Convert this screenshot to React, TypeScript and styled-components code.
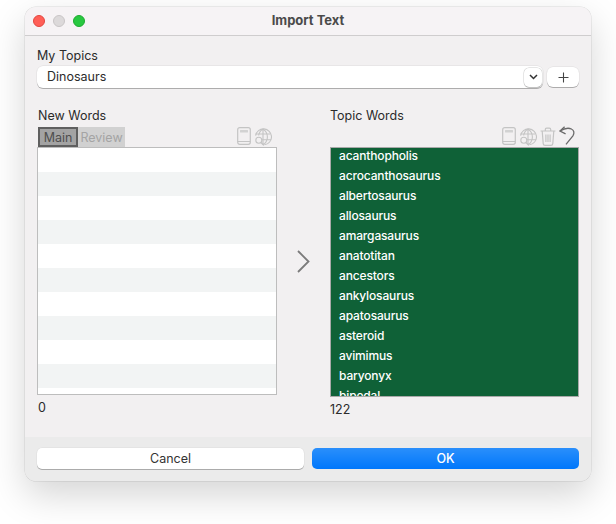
import React from 'react';
import styled, { createGlobalStyle } from 'styled-components';

const GlobalStyle = createGlobalStyle`
  html, body {
    margin: 0;
    padding: 0;
    background: #ffffff;
  }
  body {
    font-family: Inter, "Liberation Sans", sans-serif;
    font-size: 12.5px;
    color: #2b2b2b;
  }
`;

const Page = styled.div`
  width: 616px;
  height: 524px;
  padding: 7px 25px 0;
  box-sizing: border-box;
  overflow: hidden;
`;

const Window = styled.div`
  width: 566px;
  height: 474px;
  box-sizing: border-box;
  display: flex;
  flex-direction: column;
  background: #f2f0f1;
  border-radius: 11px;
  overflow: hidden;
  box-shadow: 0 0 0 0.5px rgba(0, 0, 0, 0.12), 0 14px 36px rgba(0, 0, 0, 0.17);
`;

const TitleBar = styled.div`
  position: relative;
  flex: none;
  height: 29px;
  padding-bottom: 2px;
  box-sizing: border-box;
  display: flex;
  align-items: center;
  justify-content: center;
  background: #f6f3f5;
  border-bottom: 1px solid #cfcdce;
  font-weight: 700;
  font-size: 13px;
  color: #4a4a4a;
`;

const Lights = styled.div`
  position: absolute;
  left: 8px;
  top: 8px;
  display: flex;
  gap: 8px;
`;

const Light = styled.span<{ $color: string; $edge: string }>`
  width: 12px;
  height: 12px;
  box-sizing: border-box;
  border-radius: 50%;
  background: ${(p) => p.$color};
  border: 0.5px solid ${(p) => p.$edge};
`;

const Body = styled.div`
  flex: 1;
  display: flex;
  flex-direction: column;
  padding: 12px 12px 0;
`;

const Label = styled.div<{ $indent?: number }>`
  height: 16px;
  line-height: 16px;
  padding-left: ${(p) => p.$indent ?? 0}px;
`;

const TopicRow = styled.div`
  display: flex;
  align-items: center;
  gap: 4px;
  margin-top: 2px;
  height: 22px;
`;

const Combo = styled.div`
  width: 506px;
  height: 22px;
  box-sizing: border-box;
  display: flex;
  align-items: center;
  justify-content: space-between;
  padding: 0 1px 2px 10px;
  background: #ffffff;
  border-radius: 6px;
  box-shadow: 0 0 0 0.5px rgba(0, 0, 0, 0.08), 0 1px 0 rgba(0, 0, 0, 0.25);
`;

const ChevronButton = styled.span`
  width: 18px;
  height: 19px;
  margin-top: 2px;
  display: flex;
  align-items: center;
  justify-content: center;
  background: #ffffff;
  border-radius: 5px;
  box-shadow: 0 0 0 0.5px rgba(0, 0, 0, 0.2), 0 1px 0 rgba(0, 0, 0, 0.15);
`;

const PlusButton = styled.span`
  width: 32px;
  height: 20px;
  display: flex;
  align-items: center;
  justify-content: center;
  background: #ffffff;
  border-radius: 6px;
  box-shadow: 0 0 0 0.5px rgba(0, 0, 0, 0.08), 0 1px 0 rgba(0, 0, 0, 0.25);
`;

const Columns = styled.div`
  display: grid;
  grid-template-columns: 240px 53px 249px;
  margin-top: 20px;
`;

const Column = styled.div`
  display: flex;
  flex-direction: column;
`;

const ArrowCell = styled.div`
  display: flex;
  align-items: center;
  justify-content: center;
  padding-bottom: 3px;
`;

const ListBar = styled.div`
  height: 20px;
  margin-top: 3px;
  display: flex;
  align-items: flex-end;
  justify-content: space-between;
`;

const Tabs = styled.div`
  display: flex;
  margin-left: 1px;
`;

const Tab = styled.span<{ $active?: boolean }>`
  height: 20px;
  box-sizing: border-box;
  display: flex;
  align-items: center;
  justify-content: center;
  width: ${(p) => (p.$active ? 40 : 47)}px;
  background: ${(p) => (p.$active ? '#a3a3a3' : '#d1d1d1')};
  border: ${(p) => (p.$active ? '2px solid #5f5f5f' : 'none')};
  color: ${(p) => (p.$active ? '#4e4e4e' : '#a4a4a4')};
`;

const Tools = styled.div<{ $right: number }>`
  margin-left: auto;
  padding-right: ${(p) => p.$right}px;
  padding-bottom: 1px;
  display: flex;
  gap: 3px;
  align-items: flex-end;
`;

const Table = styled.div`
  height: 248px;
  box-sizing: border-box;
  background: #ffffff;
  border: 1px solid #bdbdbd;
  overflow: hidden;
`;

const Row = styled.div<{ $striped: boolean }>`
  height: 24px;
  background: ${(p) => (p.$striped ? '#f2f4f4' : '#ffffff')};
`;

const WordTable = styled.div`
  height: 250px;
  box-sizing: border-box;
  background: #0f6137;
  border: 1px solid #a9a9a9;
  overflow: hidden;
  color: #ffffff;
`;

const Word = styled.div`
  height: 20px;
  line-height: 16px;
  padding-left: 8px;
  font-size: 12px;
  font-weight: 500;
  letter-spacing: -0.15px;
`;

const Count = styled.div<{ $top: number; $indent: number }>`
  margin-top: ${(p) => p.$top}px;
  padding-left: ${(p) => p.$indent}px;
  height: 16px;
  line-height: 16px;
`;

const Footer = styled.div`
  flex: none;
  height: 44px;
  box-sizing: border-box;
  padding: 11px 12px 0;
  display: grid;
  grid-template-columns: 267px 267px;
  column-gap: 8px;
  background: #ebebeb;
`;

const DialogButton = styled.div<{ $primary?: boolean }>`
  height: 21px;
  display: flex;
  align-items: center;
  justify-content: center;
  border-radius: 5px;
  background: ${(p) =>
    p.$primary ? 'linear-gradient(#2a8ffb, #0077fb)' : '#ffffff'};
  color: ${(p) => (p.$primary ? '#ffffff' : '#333333')};
  font-weight: ${(p) => (p.$primary ? 500 : 400)};
  box-shadow: ${(p) =>
    p.$primary
      ? 'none'
      : '0 0 0 0.5px rgba(0, 0, 0, 0.06), 0 1px 0 rgba(0, 0, 0, 0.25)'};
`;

const words = [
  'acanthopholis',
  'acrocanthosaurus',
  'albertosaurus',
  'allosaurus',
  'amargasaurus',
  'anatotitan',
  'ancestors',
  'ankylosaurus',
  'apatosaurus',
  'asteroid',
  'avimimus',
  'baryonyx',
  'bipedal',
];

function BookIcon(): JSX.Element {
  return (
    <svg width="14" height="18" viewBox="0 0 14 18" fill="none" stroke="#c4c4c4" strokeWidth="1.2" style={{ marginBottom: 1 }}>
      <rect x="0.7" y="0.7" width="12.6" height="16.6" rx="2" />
      <path d="M0.7 14.5h12.6" />
      <rect x="3" y="3" width="8" height="2.6" rx="0.5" fill="#d2d2d2" stroke="none" />
    </svg>
  );
}

function GlobeSearchIcon(): JSX.Element {
  return (
    <svg width="18" height="18" viewBox="0 0 18 18" fill="none" stroke="#c4c4c4" strokeWidth="1.1">
      <path d="M1.6 7.6A8 8 0 1 1 10.6 16.8" />
      <path d="M1.6 6h14.8M7.5 11.8h9.6M9 1v16M9 1C6 3 4.8 5.4 4.7 7.6M9 1c3.2 2.2 4.4 5 4.4 8 0 3-1.4 5.8-4.4 8" />
      <circle cx="4.8" cy="12.2" r="3" fill="#f2f0f1" />
      <path d="M7 14.4l2.8 2.8" strokeWidth="1.4" />
    </svg>
  );
}

function TrashIcon(): JSX.Element {
  return (
    <svg width="16" height="19" viewBox="0 0 16 19" fill="none" stroke="#c4c4c4" strokeWidth="1.2">
      <path d="M0.6 4h14.8M5.3 4V2.6c0-.9.5-1.4 1.3-1.4h2.8c.8 0 1.3.5 1.3 1.4V4" />
      <path d="M2.2 4l1 12.6c.1 1.2.7 1.8 1.9 1.8h5.8c1.2 0 1.8-.6 1.9-1.8L13.8 4" />
      <path d="M5.9 7.5v7.5M8 7.5v7.5M10.1 7.5v7.5" />
    </svg>
  );
}

function UndoIcon(): JSX.Element {
  return (
    <svg width="16" height="19" viewBox="0 0 16 19" fill="none" stroke="#6a6a6a" strokeWidth="1.3" style={{ marginBottom: 1 }}>
      <path d="M5.6 0.8L1 5l5.6 2.8" />
      <path d="M1 5c3.6-2.2 8-3.6 11.4-2 2.9 1.4 3.1 4.2 1.5 6.8L7 18.4" />
    </svg>
  );
}

export default function App(): JSX.Element {
  return (
    <Page>
      <GlobalStyle />
      <Window>
        <TitleBar>
          <Lights>
            <Light $color="#ff5f57" $edge="#e2463f" />
            <Light $color="#dcd9da" $edge="#c8c5c6" />
            <Light $color="#28c840" $edge="#1eaa30" />
          </Lights>
          Import Text
        </TitleBar>
        <Body>
          <Label>My Topics</Label>
          <TopicRow>
            <Combo>
              Dinosaurs
              <ChevronButton>
                <svg width="9" height="6" viewBox="0 0 9 6" fill="none" stroke="#333" strokeWidth="1.5">
                  <path d="M1 1l3.5 3.5L8 1" />
                </svg>
              </ChevronButton>
            </Combo>
            <PlusButton>
              <svg width="11" height="11" viewBox="0 0 11 11" fill="none" stroke="#444" strokeWidth="1.1">
                <path d="M5.5 0.5v10M0.5 5.5h10" />
              </svg>
            </PlusButton>
          </TopicRow>
          <Columns>
            <Column>
              <Label $indent={1}>New Words</Label>
              <ListBar>
                <Tabs>
                  <Tab $active>Main</Tab>
                  <Tab>Review</Tab>
                </Tabs>
                <Tools $right={5}>
                  <BookIcon />
                  <GlobeSearchIcon />
                </Tools>
              </ListBar>
              <Table>
                {Array.from({ length: 11 }, (_, i) => (
                  <Row key={i} $striped={i % 2 === 1} />
                ))}
              </Table>
              <Count $top={5} $indent={1}>
                0
              </Count>
            </Column>
            <ArrowCell>
              <svg width="13" height="23" viewBox="0 0 13 23" fill="none" stroke="#7b7b7b" strokeWidth="1.8">
                <path d="M1 1l10.5 10.5L1 22" />
              </svg>
            </ArrowCell>
            <Column>
              <Label>Topic Words</Label>
              <ListBar>
                <Tools $right={4}>
                  <BookIcon />
                  <GlobeSearchIcon />
                  <TrashIcon />
                  <UndoIcon />
                </Tools>
              </ListBar>
              <WordTable>
                {words.map((word) => (
                  <Word key={word}>{word}</Word>
                ))}
              </WordTable>
              <Count $top={5} $indent={0}>
                122
              </Count>
            </Column>
          </Columns>
        </Body>
        <Footer>
          <DialogButton>Cancel</DialogButton>
          <DialogButton $primary>OK</DialogButton>
        </Footer>
      </Window>
    </Page>
  );
}
